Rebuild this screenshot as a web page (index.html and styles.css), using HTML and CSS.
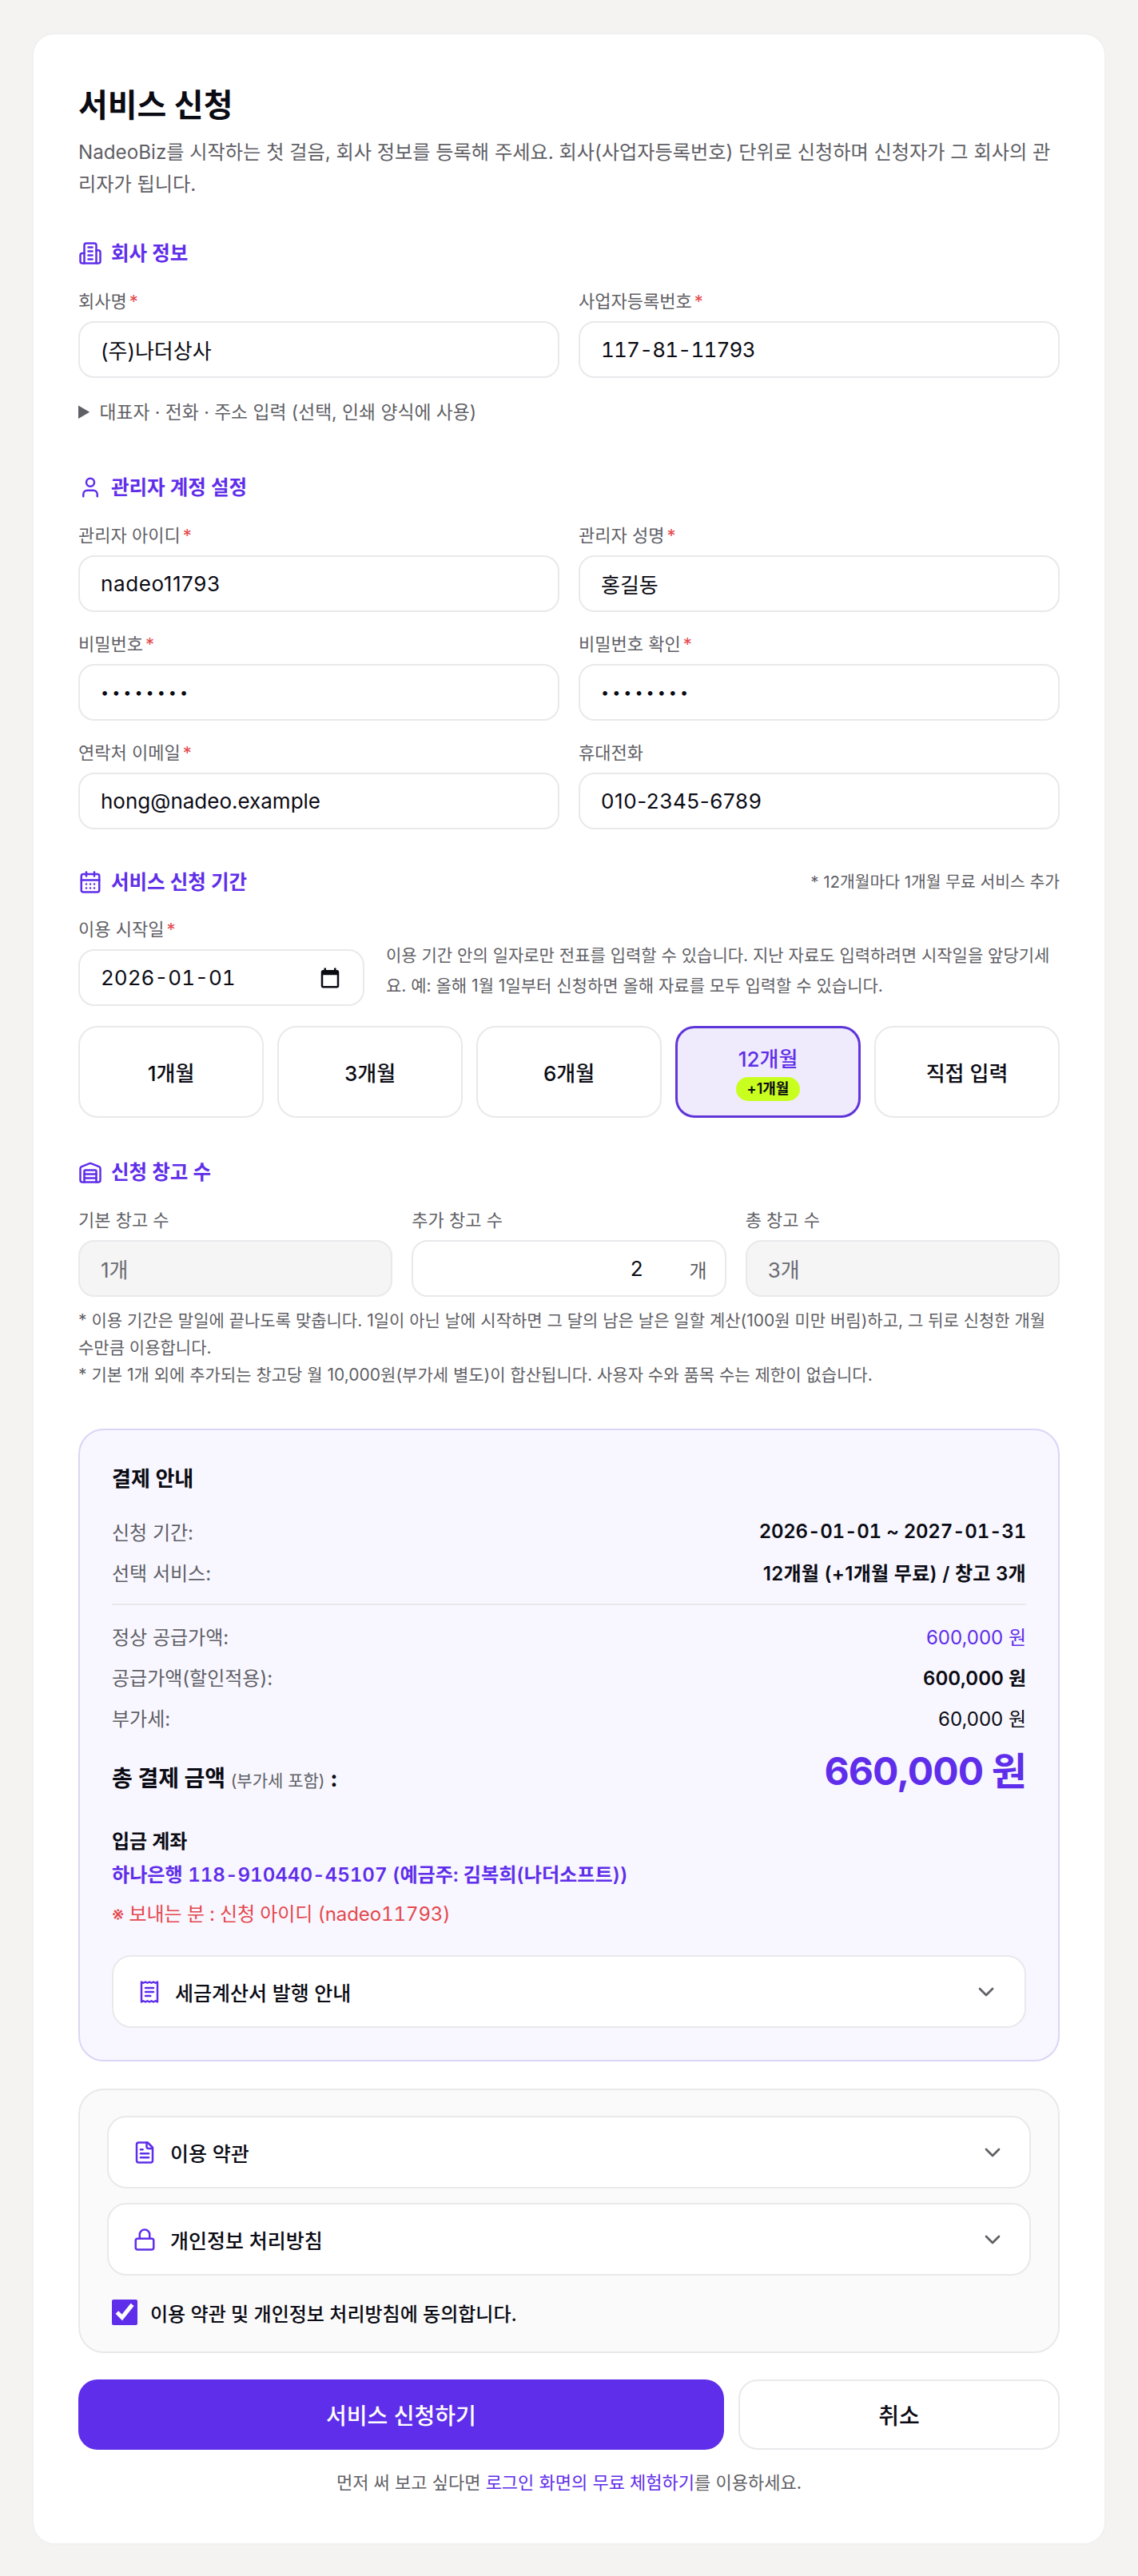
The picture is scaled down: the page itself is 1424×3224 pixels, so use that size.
FILE: index.html
```html
<!DOCTYPE html>
<html lang="ko">
<head>
<meta charset="utf-8">
<title>서비스 신청</title>
<link rel="stylesheet" href="styles.css">
</head>
<body>
<main class="card">
  <h1 class="title">서비스 신청</h1>
  <p class="intro">NadeoBiz를 시작하는 첫 걸음, 회사 정보를 등록해 주세요. 회사(사업자등록번호) 단위로 신청하며 신청자가 그 회사의 관리자가 됩니다.</p>

  <section class="section">
    <h2 class="section-title">
      <svg class="icon" viewBox="0 0 24 24"><path d="M6 22V4a2 2 0 0 1 2-2h8a2 2 0 0 1 2 2v18Z"/><path d="M6 12H4a2 2 0 0 0-2 2v6a2 2 0 0 0 2 2h2"/><path d="M18 9h2a2 2 0 0 1 2 2v9a2 2 0 0 1-2 2h-2"/><path d="M10 6h4"/><path d="M10 10h4"/><path d="M10 14h4"/><path d="M10 18h4"/></svg>
      회사 정보
    </h2>
    <div class="grid-2">
      <div class="field"><label class="label">회사명<span class="req">*</span></label><input class="input" type="text" value="(주)나더상사"></div>
      <div class="field"><label class="label">사업자등록번호<span class="req">*</span></label><input class="input biz" type="text" value="117-81-11793"></div>
    </div>
    <details class="more"><summary>대표자 · 전화 · 주소 입력 (선택, 인쇄 양식에 사용)</summary></details>
  </section>

  <section class="section">
    <h2 class="section-title">
      <svg class="icon" viewBox="0 0 24 24"><path d="M19 21v-2a4 4 0 0 0-4-4H9a4 4 0 0 0-4 4v2"/><circle cx="12" cy="7" r="4"/></svg>
      관리자 계정 설정
    </h2>
    <div class="grid-2">
      <div class="field"><label class="label">관리자 아이디<span class="req">*</span></label><input class="input loose" type="text" value="nadeo11793"></div>
      <div class="field"><label class="label">관리자 성명<span class="req">*</span></label><input class="input" type="text" value="홍길동"></div>
      <div class="field"><label class="label">비밀번호<span class="req">*</span></label><input class="input secret" type="password" value="12345678"></div>
      <div class="field"><label class="label">비밀번호 확인<span class="req">*</span></label><input class="input secret" type="password" value="12345678"></div>
      <div class="field"><label class="label">연락처 이메일<span class="req">*</span></label><input class="input" type="text" value="hong@nadeo.example"></div>
      <div class="field"><label class="label">휴대전화</label><input class="input loose" type="text" value="010-2345-6789"></div>
    </div>
  </section>

  <section class="section">
    <div class="section-head">
      <h2 class="section-title flat">
        <svg class="icon" viewBox="0 0 24 24"><path d="M8 2v4"/><path d="M16 2v4"/><rect x="3" y="4" width="18" height="18" rx="2"/><path d="M3 10h18"/><path d="M8 14h.01"/><path d="M12 14h.01"/><path d="M16 14h.01"/><path d="M8 18h.01"/><path d="M12 18h.01"/><path d="M16 18h.01"/></svg>
        서비스 신청 기간
      </h2>
      <span class="head-note">* 12개월마다 1개월 무료 서비스 추가</span>
    </div>
    <div class="date-row">
      <div class="field date-field"><label class="label">이용 시작일<span class="req">*</span></label>
        <div class="input date-input"><span>2026-01-01</span>
          <svg class="cal" viewBox="0 0 24 24"><path d="M19 4h-1V2h-2v2H8V2H6v2H5c-1.1 0-2 .9-2 2v14c0 1.1.9 2 2 2h14c1.1 0 2-.9 2-2V6c0-1.1-.9-2-2-2zm0 16H5V9h14v11z"/></svg>
        </div>
      </div>
      <p class="date-hint">이용 기간 안의 일자로만 전표를 입력할 수 있습니다. 지난 자료도 입력하려면 시작일을 앞당기세요. 예: 올해 1월 1일부터 신청하면 올해 자료를 모두 입력할 수 있습니다.</p>
    </div>
    <div class="periods">
      <button class="period" type="button">1개월</button>
      <button class="period" type="button">3개월</button>
      <button class="period" type="button">6개월</button>
      <button class="period active" type="button">12개월<span class="badge">+1개월</span></button>
      <button class="period" type="button">직접 입력</button>
    </div>
  </section>

  <section class="section tight">
    <h2 class="section-title">
      <svg class="icon" viewBox="0 0 24 24"><path d="M22 8.35V20a2 2 0 0 1-2 2H4a2 2 0 0 1-2-2V8.35A2 2 0 0 1 3.26 6.5l8-3.2a2 2 0 0 1 1.48 0l8 3.2A2 2 0 0 1 22 8.35Z"/><path d="M6 18h12"/><path d="M6 14h12"/><path d="M6 22V11a1 1 0 0 1 1-1h10a1 1 0 0 1 1 1v11"/></svg>
      신청 창고 수
    </h2>
    <div class="grid-3">
      <div class="field"><label class="label">기본 창고 수</label><input class="input muted" type="text" value="1개" disabled></div>
      <div class="field"><label class="label">추가 창고 수</label>
        <div class="suffix-wrap"><input class="input number" type="text" value="2"><span class="suffix">개</span></div>
      </div>
      <div class="field"><label class="label">총 창고 수</label><input class="input muted" type="text" value="3개" disabled></div>
    </div>
    <p class="notes">* 이용 기간은 말일에 끝나도록 맞춥니다. 1일이 아닌 날에 시작하면 그 달의 남은 날은 일할 계산(100원 미만 버림)하고, 그 뒤로 신청한 개월 수만큼 이용합니다.<br>* 기본 1개 외에 추가되는 창고당 월 10,000원(부가세 별도)이 합산됩니다. 사용자 수와 품목 수는 제한이 없습니다.</p>
  </section>

  <section class="pay">
    <h3 class="pay-title">결제 안내</h3>
    <div class="row"><span class="row-key">신청 기간:</span><strong class="row-val dates">2026-01-01 ~ 2027-01-31</strong></div>
    <div class="row"><span class="row-key">선택 서비스:</span><strong class="row-val wide">12개월 (+1개월 무료) / 창고 3개</strong></div>
    <hr class="divider">
    <div class="row"><span class="row-key">정상 공급가액:</span><span class="row-plain purple">600,000 원</span></div>
    <div class="row"><span class="row-key">공급가액(할인적용):</span><strong class="row-val">600,000 원</strong></div>
    <div class="row"><span class="row-key">부가세:</span><span class="row-plain">60,000 원</span></div>
    <div class="total"><span class="total-key">총 결제 금액 <small>(부가세 포함)</small> :</span><span class="total-val">660,000 원</span></div>
    <div class="bank-title">입금 계좌</div>
    <div class="bank-no">하나은행 118-910440-45107 (예금주: 김복희(나더소프트))</div>
    <div class="bank-note">※ 보내는 분 : 신청 아이디 (nadeo11793)</div>
    <details class="acc acc-tax">
      <summary>
        <svg class="icon" viewBox="0 0 24 24"><path d="M4 2v20l2-1 2 1 2-1 2 1 2-1 2 1 2-1 2 1V2l-2 1-2-1-2 1-2-1-2 1-2-1-2 1Z"/><path d="M16 8H8"/><path d="M16 12H8"/><path d="M13 16H8"/></svg>
        <span class="acc-text">세금계산서 발행 안내</span>
        <svg class="chev" viewBox="0 0 24 24"><path d="m6 9 6 6 6-6"/></svg>
      </summary>
    </details>
  </section>

  <section class="terms">
    <details class="acc">
      <summary>
        <svg class="icon" viewBox="0 0 24 24"><path d="M15 2H6a2 2 0 0 0-2 2v16a2 2 0 0 0 2 2h12a2 2 0 0 0 2-2V7Z"/><path d="M14 2v4a2 2 0 0 0 2 2h4"/><path d="M10 9H8"/><path d="M16 13H8"/><path d="M16 17H8"/></svg>
        <span class="acc-text">이용 약관</span>
        <svg class="chev" viewBox="0 0 24 24"><path d="m6 9 6 6 6-6"/></svg>
      </summary>
    </details>
    <details class="acc">
      <summary>
        <svg class="icon" viewBox="0 0 24 24"><rect x="3" y="11" width="18" height="11" rx="2"/><path d="M7 11V7a5 5 0 0 1 10 0v4"/></svg>
        <span class="acc-text">개인정보 처리방침</span>
        <svg class="chev" viewBox="0 0 24 24"><path d="m6 9 6 6 6-6"/></svg>
      </summary>
    </details>
    <label class="agree"><input class="check" type="checkbox" checked>이용 약관 및 개인정보 처리방침에 동의합니다.</label>
  </section>

  <div class="actions">
    <button class="btn primary" type="button">서비스 신청하기</button>
    <button class="btn ghost" type="button">취소</button>
  </div>
  <p class="foot">먼저 써 보고 싶다면 <a class="foot-link" href="#">로그인 화면의 무료 체험하기</a>를 이용하세요.</p>
</main>
</body>
</html>
```

FILE: styles.css
```css
* { box-sizing: border-box; }
html, body { margin: 0; padding: 0; }
body {
  background: #f4f3f1;
  color: #0b0b14;
  font-family: "Inter", "Noto Sans CJK KR", sans-serif;
  padding: 41px 40px 41px;
}
.card {
  background: #fff;
  border: 2px solid #f0f0f1;
  border-radius: 28px;
  padding: 55px 56px 60px;
}
.title { margin: 0; font-size: 40px; line-height: 64px; font-weight: 700; padding-top: 2px; }
.intro { margin: 7px 0 0; font-size: 24.2px; line-height: 40px; color: #5f5f66; }
.section { margin-top: 48px; }
.section.tight { margin-top: 50px; }
.section-title {
  display: flex; align-items: center; gap: 11px;
  margin: 0 0 26px;
  height: 36px;
  font-size: 24.5px; line-height: 36px; font-weight: 600; color: #5f2eea;
}
.section-title.flat { margin: 0; }
.icon {
  width: 30px; height: 30px; flex: none;
  fill: none; stroke: #5f2eea; stroke-width: 2; stroke-linecap: round; stroke-linejoin: round;
}
.section-head { display: flex; align-items: center; justify-content: space-between; margin-bottom: 25px; }
.head-note { font-size: 20.4px; line-height: 32px; color: #5f5f66; }
.grid-2 { display: grid; grid-template-columns: 1fr 1fr; gap: 24px; }
.grid-3 { display: grid; grid-template-columns: 1fr 1fr 1fr; gap: 24px; }
.field { min-width: 0; }
.label { display: block; margin-bottom: 9px; font-size: 22px; line-height: 32px; color: #5f5f66; }
.req { margin-left: 3px; color: #e5484d; }
.input {
  display: block; width: 100%; height: 71px;
  padding: 0 26px;
  border: 2px solid #e9e9ec; border-radius: 20px;
  background: #fff; color: #0b0b14;
  font: 400 26px "Inter", "Noto Sans CJK KR", sans-serif;
  outline: none;
}
.biz { font-variant-numeric: tabular-nums; letter-spacing: -0.8px; }
.loose { letter-spacing: 0.6px; }
.secret { font-size: 18px; letter-spacing: 4px; }
.muted { background: #f5f5f5; color: #6b6b72; -webkit-text-fill-color: #6b6b72; opacity: 1; }
.more { margin-top: 26px; font-size: 22.8px; line-height: 32px; color: #5f5f66; }
.more summary { cursor: pointer; }
.more summary::marker { font-size: 25px; }
.section:has(.more) + .section { margin-top: 60px; }
.date-row { display: flex; align-items: flex-end; gap: 27px; }
.date-field { flex: 0 0 358px; }
.date-input { display: flex; align-items: center; justify-content: space-between; font-variant-numeric: tabular-nums; }
.cal { width: 30px; height: 30px; fill: #0b0b14; }
.date-hint { flex: 1; margin: 0 0 6px; font-size: 21px; line-height: 38px; color: #5f5f66; }
.periods { display: grid; grid-template-columns: repeat(5, 1fr); gap: 17px; margin-top: 25px; }
.period {
  display: flex; flex-direction: column; align-items: center; justify-content: center;
  height: 115px; padding: 0;
  background: #fff; color: #0b0b14;
  border: 2px solid #e9e9ec; border-radius: 24px;
  font: 500 26px "Inter", "Noto Sans CJK KR", sans-serif;
}
.period.active { background: #f0eafd; border: 3px solid #5f36d8; color: #5f2eea; }
.badge {
  margin-top: 6px; padding: 0 14px; height: 30px;
  border-radius: 15px; background: #c8ff1e; color: #0b0b14;
  font-size: 18px; font-weight: 600; line-height: 30px;
}
.suffix-wrap { position: relative; }
.number { text-align: right; padding-right: 102px; }
.suffix { position: absolute; right: 24px; top: 50%; transform: translateY(-50%); font-size: 24px; color: #5f5f66; }
.notes { margin: 13px 0 0; font-size: 21px; line-height: 34px; color: #5f5f66; }
.pay {
  margin-top: 50px;
  padding: 43px 40px 40px;
  background: #f8f7ff;
  border: 2px solid #dcd4f6;
  border-radius: 32px;
}
.pay-title { margin: 0 0 30px; font-size: 26px; line-height: 36px; font-weight: 600; }
.row { display: flex; justify-content: space-between; align-items: center; height: 34px; font-size: 24px; margin-bottom: 17px; }
.row-key { color: #5f5f66; }
.row-val { font-weight: 600; }
.dates { font-variant-numeric: tabular-nums; letter-spacing: -0.2px; }
.wide { letter-spacing: 0.3px; }
.row-plain { font-weight: 400; }
.purple { color: #5f2eea; }
.divider { height: 2px; margin: 23px 0 21px; border: 0; background: #e9e9ec; }
.total { display: flex; justify-content: space-between; align-items: flex-end; margin-top: 19px; }
.total-key { font-size: 28px; line-height: 40px; font-weight: 700; }
.total-key small { font-size: 21px; font-weight: 400; color: #5f5f66; }
.total-val { font-size: 48px; line-height: 64px; font-weight: 700; letter-spacing: -0.9px; color: #5f2eea; }
.bank-title { margin-top: 39px; font-size: 24px; line-height: 34px; font-weight: 600; }
.bank-no { margin-top: 8px; font-size: 24.1px; line-height: 34px; font-weight: 600; color: #5f2eea; font-variant-numeric: tabular-nums; }
.bank-note { margin-top: 15px; font-size: 24px; line-height: 34px; color: #e5484d; font-variant-numeric: tabular-nums; letter-spacing: -0.1px; }
.acc { background: #fff; border: 2px solid #e9e9ec; border-radius: 24px; }
.acc summary {
  display: flex; align-items: center; gap: 17px;
  height: 87px; padding: 0 30px 0 30px;
  list-style: none; cursor: pointer;
}
.acc summary::-webkit-details-marker { display: none; }
.acc-text { flex: 1; font-size: 25px; font-weight: 500; }
.chev { width: 32px; height: 32px; fill: none; stroke: #5f5f66; stroke-width: 2; stroke-linecap: round; stroke-linejoin: round; }
.acc-tax { margin-top: 34px; }
.acc-tax summary { padding-right: 32px; }
.terms {
  margin-top: 34px;
  padding: 32px 34px 33px;
  background: #fafafa;
  border: 2px solid #e9e9ec;
  border-radius: 32px;
}
.terms .acc + .acc { margin-top: 18px; }
.agree { display: flex; align-items: center; gap: 16px; height: 32px; margin: 30px 0 0 6px; font-size: 24px; font-weight: 500; }
.check { width: 32px; height: 32px; margin: 0; accent-color: #5f2eea; flex: none; }
.actions { display: grid; grid-template-columns: 808fr 402fr; gap: 18px; margin-top: 33px; }
.btn { height: 88px; border-radius: 24px; font: 500 28px "Inter", "Noto Sans CJK KR", sans-serif; }
.primary { background: #5f2eea; color: #fff; border: 0; }
.ghost { background: #fff; color: #0b0b14; border: 2px solid #e9e9ec; }
.foot { margin: 25px 0 0; font-size: 22px; line-height: 32px; text-align: center; color: #5f5f66; }
.foot-link { color: #5f2eea; text-decoration: none; }
```
